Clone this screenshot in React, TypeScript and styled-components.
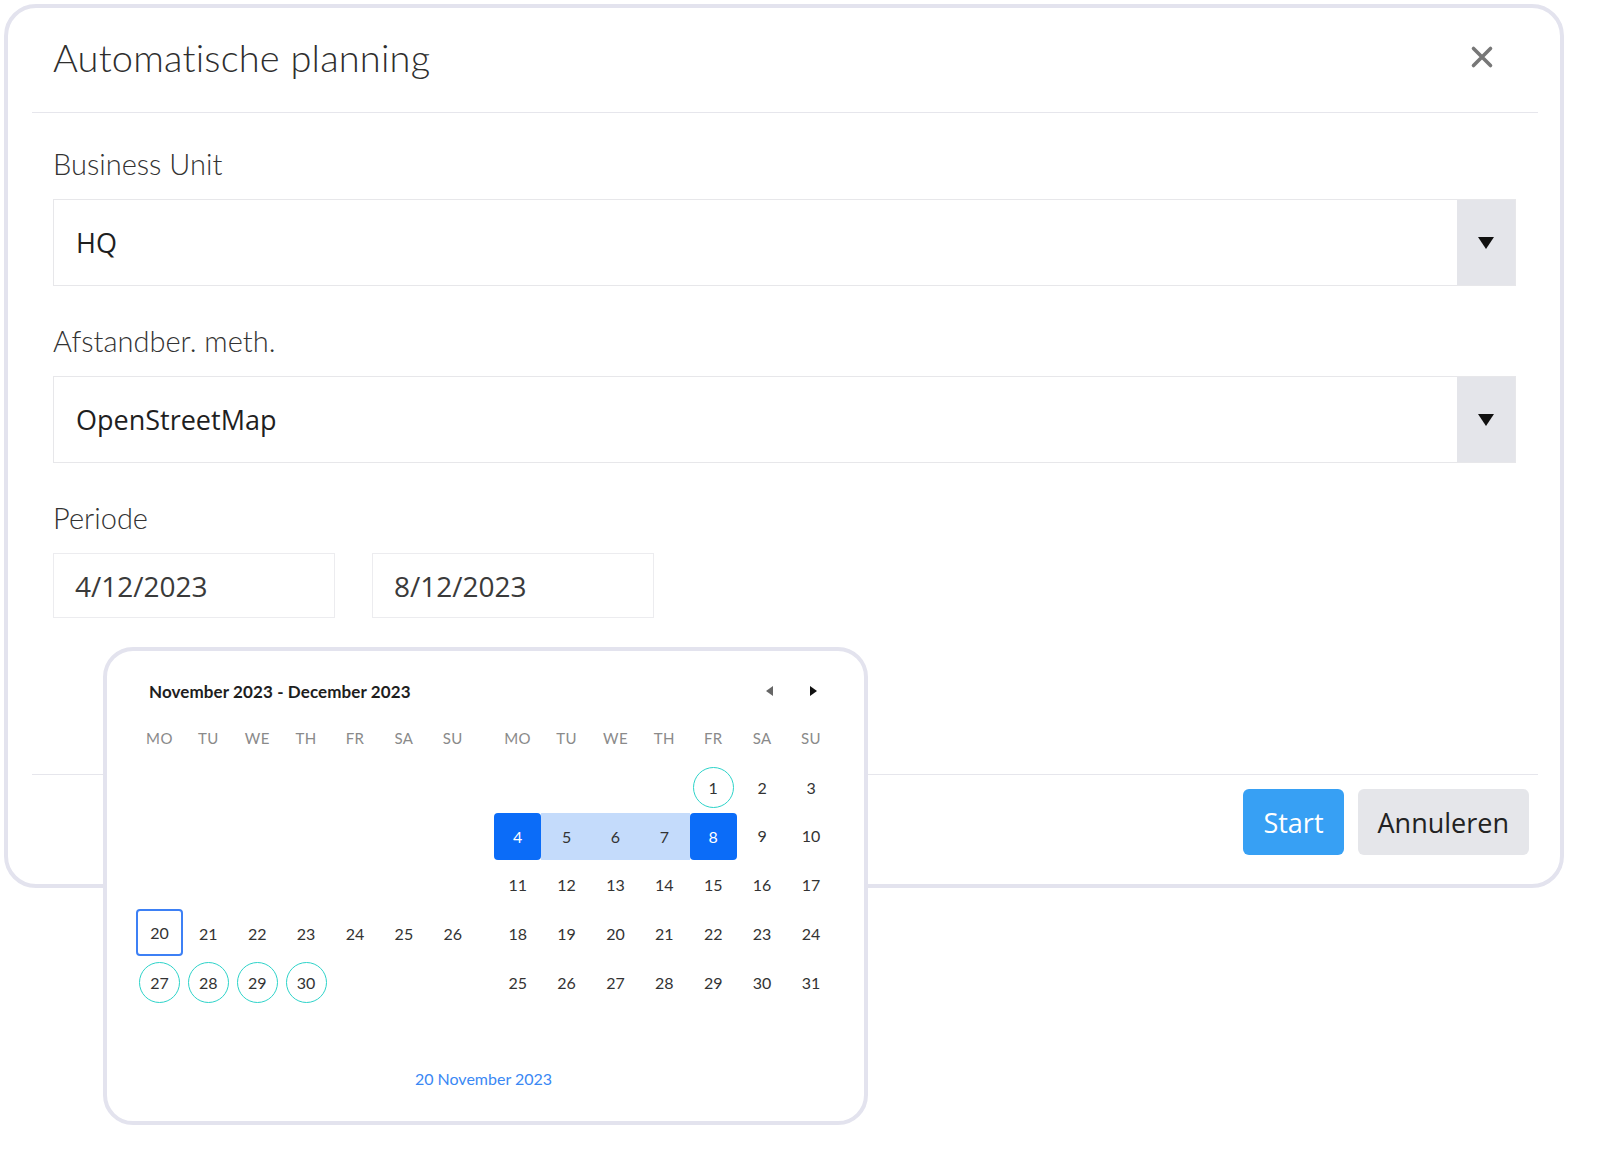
import React from 'react';
import styled, { createGlobalStyle, css } from 'styled-components';

const GlobalStyle = createGlobalStyle`
	html, body {
		margin: 0;
		padding: 0;
		background: #ffffff;
	}
	body {
		font-family: 'Lato', 'Noto Sans', sans-serif;
		color: #333333;
	}
`;

const Page = styled.div`
	padding: 4px;
	width: 1560px;
	min-height: 1150px;
	box-sizing: content-box;
`;

const Modal = styled.div`
	position: relative;
	border: 4px solid #e3e3ee;
	border-radius: 32px;
	background: #ffffff;
	display: flex;
	flex-direction: column;
`;

const Header = styled.div`
	display: flex;
	align-items: center;
	justify-content: space-between;
	margin: 0 22px 0 24px;
	padding: 27px 44px 33px 21px;
	border-bottom: 1px solid #e6e6ec;
`;

const Title = styled.h1`
	margin: 0;
	font-family: 'Lato', sans-serif;
	font-weight: 300;
	font-size: 38px;
	line-height: 44px;
	color: #2e2e2e;
	letter-spacing: 0.2px;
`;

const CloseButton = styled.button`
	border: none;
	background: none;
	padding: 0;
	width: 26px;
	height: 26px;
	display: flex;
	align-items: center;
	justify-content: center;
	margin-right: -1px;
	cursor: pointer;
`;

const Body = styled.div`
	display: flex;
	flex-direction: column;
	padding: 33px 44px 0 45px;
`;

const Label = styled.label`
	font-family: 'Lato', sans-serif;
	font-weight: 300;
	font-size: 29px;
	line-height: 36px;
	color: #333333;
	margin-bottom: 17px;
`;

const Field = styled.div`
	margin-bottom: 37px;
	display: flex;
	flex-direction: column;
`;

const Select = styled.div`
	display: flex;
	height: 87px;
	border: 1px solid #e7e7ea;
	box-sizing: border-box;
	background: #ffffff;
`;

const SelectValue = styled.div`
	flex: 1;
	display: flex;
	align-items: center;
	padding-left: 22px;
	font-family: 'Open Sans', 'Noto Sans', sans-serif;
	font-size: 27px;
	color: #1f1f1f;
`;

const SelectArrow = styled.div`
	width: 58px;
	background: #e4e5ea;
	display: flex;
	align-items: center;
	justify-content: center;
`;

const DateRow = styled.div`
	position: relative;
	display: flex;
	gap: 37px;
`;

const DateInput = styled.div`
	width: 282px;
	height: 65px;
	box-sizing: border-box;
	border: 1px solid #ececef;
	display: flex;
	align-items: center;
	padding-left: 21px;
	font-family: 'Open Sans', 'Noto Sans', sans-serif;
	font-size: 28px;
	color: #3a3a3a;
`;

const Footer = styled.div`
	margin: 156px 22px 0 24px;
	border-top: 1px solid #e6e6ec;
	display: flex;
	justify-content: flex-end;
	gap: 14px;
	padding: 14px 9px 29px 0;
`;

const Button = styled.button<{ $primary?: boolean }>`
	height: 66px;
	border: none;
	border-radius: 6px;
	padding: 0 20px;
	font-family: 'Open Sans', 'Noto Sans', sans-serif;
	font-size: 27px;
	cursor: pointer;
	${({ $primary }) =>
		$primary
			? css`
					background: #37a0f4;
					color: #ffffff;
			  `
			: css`
					background: #e5e6ea;
					color: #222222;
			  `}
`;

/* calendar popover */

const Popover = styled.div`
	position: absolute;
	left: 50px;
	top: 94px;
	z-index: 10;
	width: 765px;
	height: 478px;
	box-sizing: border-box;
	border: 4px solid #e3e3ee;
	border-radius: 30px;
	background: #ffffff;
	padding: 27px 30px 0 28px;
	display: flex;
	flex-direction: column;
`;

const CalHeader = styled.div`
	display: flex;
	align-items: center;
	justify-content: space-between;
	padding: 0 16px 0 14px;
	height: 26px;
	margin-bottom: 10px;
`;

const CalTitle = styled.div`
	font-family: 'Lato', sans-serif;
	font-weight: 700;
	font-size: 17px;
	color: #1e1e1e;
	letter-spacing: 0.1px;
`;

const NavGroup = styled.div`
	display: flex;
	gap: 33px;
	align-items: center;
`;

const NavArrow = styled.button`
	border: none;
	background: none;
	padding: 0;
	width: 10px;
	height: 12px;
	display: flex;
	align-items: center;
	justify-content: center;
`;

const Months = styled.div`
	display: flex;
	gap: 16px;
`;

const MonthGrid = styled.div`
	display: grid;
	grid-template-columns: repeat(7, 48.9px);
	grid-auto-rows: 48.8px;
`;

const Weekday = styled.div`
	display: flex;
	align-items: center;
	justify-content: center;
	font-family: 'Lato', sans-serif;
	font-size: 15px;
	color: #8a8a8a;
	letter-spacing: 0.4px;
`;

type DayKind = 'plain' | 'start' | 'end' | 'range' | 'focus' | 'marked' | 'empty';

const Day = styled.div<{ $kind: DayKind }>`
	display: flex;
	align-items: center;
	justify-content: center;
	font-family: 'Lato', sans-serif;
	font-size: 16px;
	color: #333333;
	position: relative;
	box-sizing: border-box;

	${({ $kind }) => {
		switch ($kind) {
			case 'start':
			case 'end':
				return css`
					margin: 1px 1px 0 1px;
					height: 47px;
					background: #0b6cf8;
					color: #ffffff;
					border-radius: 4px;
				`;
			case 'range':
				return css`
					margin: 1px -1px 0 -1px;
					height: 47px;
					background: #c4dbfb;
				`;
			case 'focus':
				return css`
					margin: 0 1px 1px 1px;
					height: 47px;
					border: 2px solid #3d80f5;
					border-radius: 4px;
				`;
			case 'marked':
				return css`
					&::before {
						content: '';
						position: absolute;
						left: 50%;
						top: 50%;
						width: 41px;
						height: 41px;
						margin: -20.5px 0 0 -20.5px;
						border: 1.5px solid #2dd3c9;
						border-radius: 50%;
						box-sizing: border-box;
					}
				`;
			default:
				return '';
		}
	}}
`;

const CalFooter = styled.div`
	text-align: center;
	font-family: 'Lato', sans-serif;
	font-size: 16px;
	color: #3a88f4;
	margin-top: 13px;
	padding-right: 2px;
`;

const WEEKDAYS = ['MO', 'TU', 'WE', 'TH', 'FR', 'SA', 'SU'];

type Cell = { n?: number; kind: DayKind };

// november: days before the 20th are not shown
const november: Cell[] = [
	...Array.from({ length: 21 }, () => ({ kind: 'empty' as DayKind })),
	{ n: 20, kind: 'focus' },
	...[21, 22, 23, 24, 25, 26].map((n) => ({ n, kind: 'plain' as DayKind })),
	...[27, 28, 29, 30].map((n) => ({ n, kind: 'marked' as DayKind })),
];

const december: Cell[] = [
	...Array.from({ length: 4 }, () => ({ kind: 'empty' as DayKind })),
	...Array.from({ length: 31 }, (_, i) => {
		const n = i + 1;
		let kind: DayKind = 'plain';
		if (n === 1) kind = 'marked';
		if (n === 4) kind = 'start';
		if (n === 8) kind = 'end';
		if (n > 4 && n < 8) kind = 'range';
		return { n, kind };
	}),
];

function Month({ cells }: { cells: Cell[] }) {
	const padded = [...cells];
	while (padded.length < 42) padded.push({ kind: 'empty' });
	return (
		<MonthGrid>
			{WEEKDAYS.map((d) => (
				<Weekday key={d}>{d}</Weekday>
			))}
			{padded.map((c, i) => (
				<Day key={i} $kind={c.kind}>
					{c.n}
				</Day>
			))}
		</MonthGrid>
	);
}

function Caret() {
	return (
		<svg width="18" height="14" viewBox="0 0 18 14">
			<path d="M1 1 L17 1 L9 13 Z" fill="#111" />
		</svg>
	);
}

export default function App() {
	return (
		<Page>
			<GlobalStyle />
			<Modal>
				<Header>
					<Title>Automatische planning</Title>
					<CloseButton aria-label="Sluiten">
						<svg width="24" height="24" viewBox="0 0 24 24">
							<path d="M3.5 3.5 L20.5 20.5 M20.5 3.5 L3.5 20.5" stroke="#777" strokeWidth="3.6" strokeLinecap="round" />
						</svg>
					</CloseButton>
				</Header>
				<Body>
					<Field>
						<Label>Business Unit</Label>
						<Select>
							<SelectValue>HQ</SelectValue>
							<SelectArrow>
								<Caret />
							</SelectArrow>
						</Select>
					</Field>
					<Field>
						<Label>Afstandber. meth.</Label>
						<Select>
							<SelectValue>OpenStreetMap</SelectValue>
							<SelectArrow>
								<Caret />
							</SelectArrow>
						</Select>
					</Field>
					<Label>Periode</Label>
					<DateRow>
						<DateInput>4/12/2023</DateInput>
						<DateInput>8/12/2023</DateInput>
						<Popover>
							<CalHeader>
								<CalTitle>November 2023 - December 2023</CalTitle>
								<NavGroup>
									<NavArrow aria-label="Vorige">
										<svg width="8" height="10" viewBox="0 0 8 10">
											<path d="M7 0 L7 10 L0 5 Z" fill="#666" />
										</svg>
									</NavArrow>
									<NavArrow aria-label="Volgende">
										<svg width="8" height="10" viewBox="0 0 8 10">
											<path d="M1 0 L1 10 L8 5 Z" fill="#111" />
										</svg>
									</NavArrow>
								</NavGroup>
							</CalHeader>
							<Months>
								<Month cells={november} />
								<Month cells={december} />
							</Months>
							<CalFooter>20 November 2023</CalFooter>
						</Popover>
					</DateRow>
				</Body>
				<Footer>
					<Button $primary>Start</Button>
					<Button>Annuleren</Button>
				</Footer>
			</Modal>
		</Page>
	);
}
